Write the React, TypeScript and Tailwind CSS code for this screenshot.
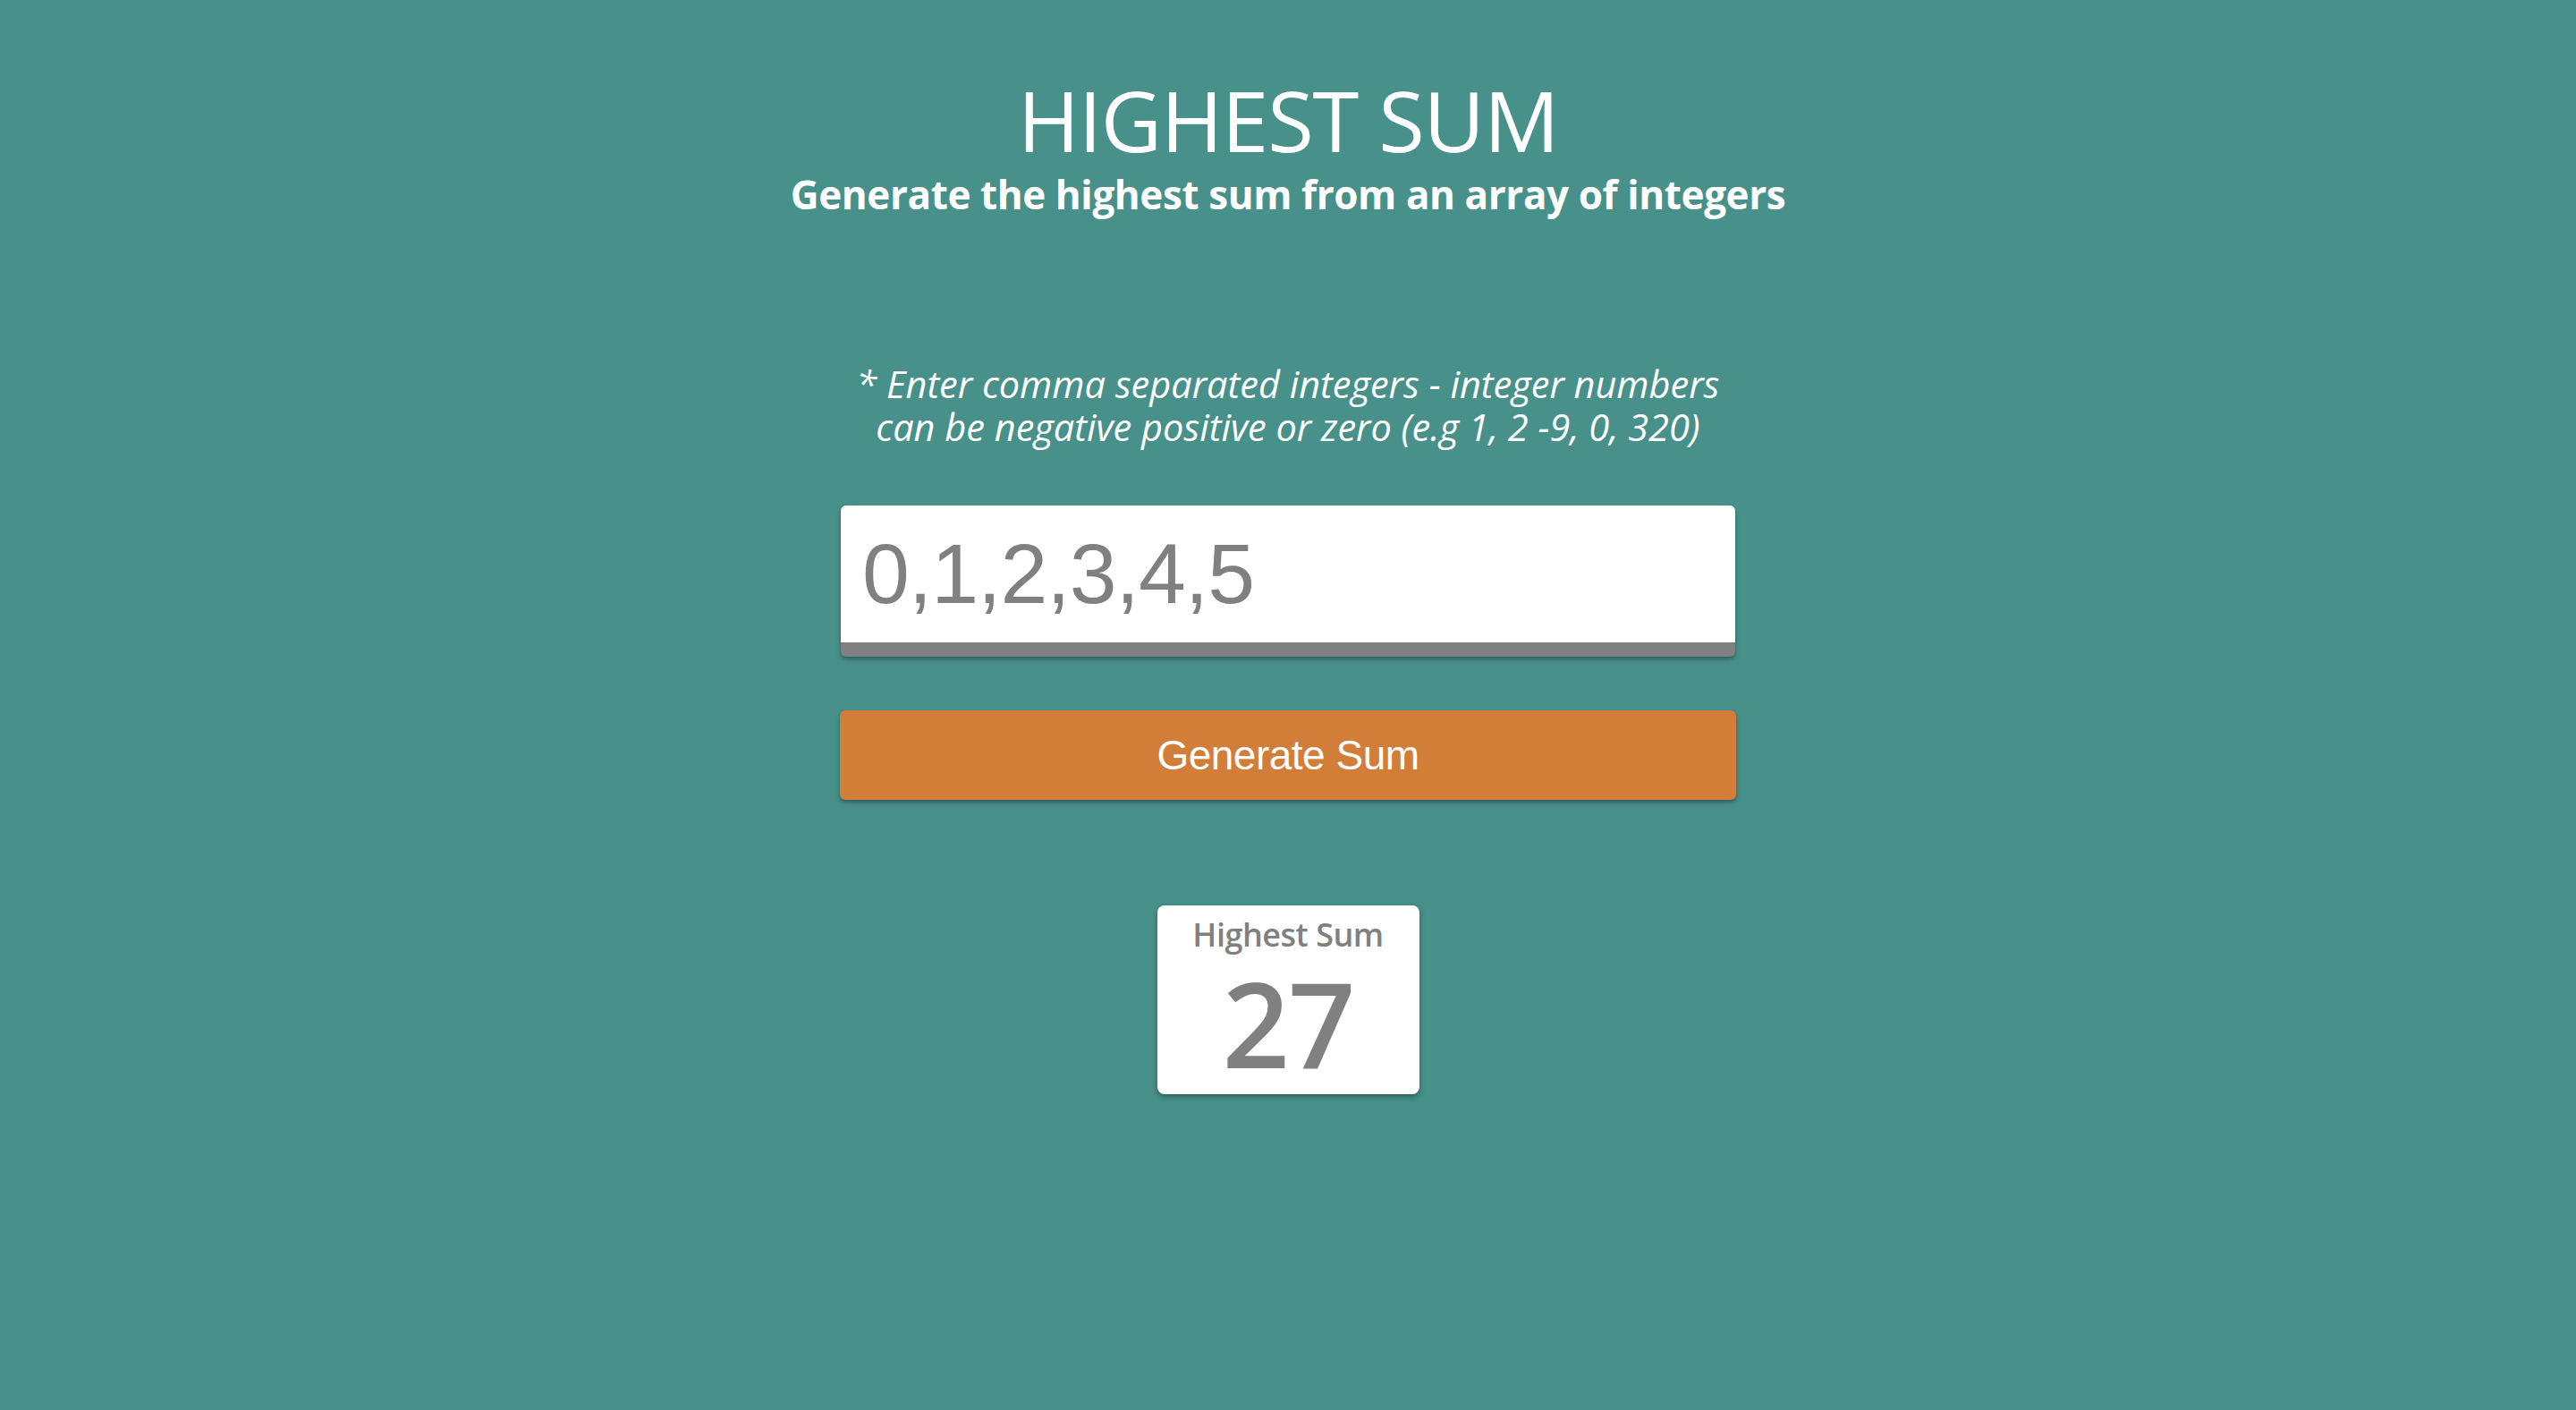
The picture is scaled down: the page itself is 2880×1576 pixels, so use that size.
import { useState } from 'react';

export default function App() {
  const [value, setValue] = useState('0,1,2,3,4,5');

  return (
    <div className="min-h-screen bg-[#47918a] flex flex-col items-center pt-[84px] font-['Open_Sans',sans-serif] text-white">
      <h1 className="text-[94px] leading-[100px] tracking-[-1.2px] font-medium">HIGHEST SUM</h1>
      <h2 className="text-[44px] leading-[56px] font-bold tracking-[-0.4px] mt-[5px]">
        Generate the highest sum from an array of integers
      </h2>

      <p className="mt-[160px] flex flex-col items-center text-[41.5px] italic text-center">
        <span className="leading-[48px]">* Enter comma separated integers - integer numbers</span>
        <span className="leading-[48px]">can be negative positive or zero (e.g 1, 2 -9, 0, 320)</span>
      </p>

      <input
        value={value}
        onChange={(e) => setValue(e.target.value)}
        className="mt-[64px] w-[1000px] h-[169px] bg-white rounded-[6px] border-b-[16px] border-[#808080] shadow-[0_3px_5px_rgba(0,0,0,0.35)] px-[24px] text-[95px] text-[#808080] font-['Liberation_Sans',sans-serif] tracking-[-1px] outline-none"
      />

      <button className="mt-[60px] w-[1002px] h-[100px] bg-[#d27d38] rounded-[6px] shadow-[0_3px_5px_rgba(0,0,0,0.35)] text-[46px] text-white font-['Liberation_Sans',sans-serif] tracking-[-0.5px]">
        Generate Sum
      </button>

      <div className="mt-[118px] w-[293px] h-[211px] bg-white rounded-[8px] shadow-[0_3px_6px_rgba(0,0,0,0.35)] flex flex-col items-center text-[#808080]">
        <div className="mt-[10px] text-[36px] leading-[46px] font-semibold tracking-[-0.5px]">Highest Sum</div>
        <div className="text-[132px] leading-[150px] font-semibold tracking-[-2px]">27</div>
      </div>
    </div>
  );
}
